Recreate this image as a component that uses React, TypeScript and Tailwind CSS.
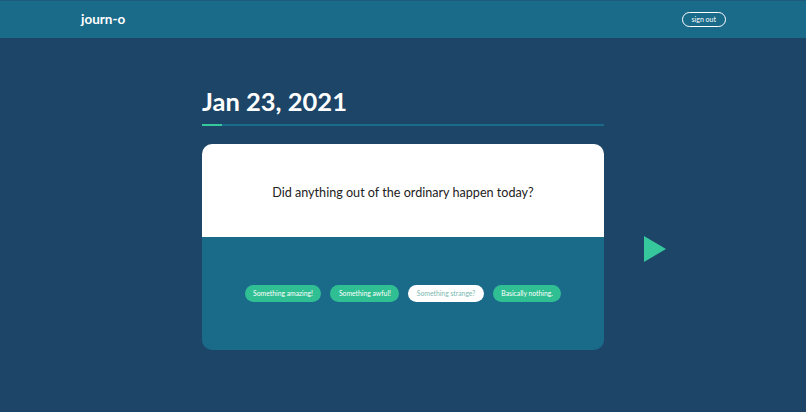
export default function App() {
  const answers = [
    { label: "Something amazing!", active: false },
    { label: "Something awful!", active: false },
    { label: "Something strange?", active: true },
    { label: "Basically nothing.", active: false },
  ];

  return (
    <div className="min-h-[412px] w-full bg-[#1c4568] font-['Lato',sans-serif]">
      <header className="h-[38px] bg-[#1a6a8a] border-t border-[#1e5a7a] flex items-center justify-between pl-[81px] pr-[80px]">
        <span className="text-[13.5px] font-bold text-white">journ-o</span>
        <button className="h-[15px] px-[9px] rounded-full border border-white text-white text-[7px] leading-none flex items-center">
          sign out
        </button>
      </header>

      <main className="relative w-[402px] mx-auto pt-[47px]">
        <h1 className="text-[25.5px] font-bold text-white leading-[32px]">Jan 23, 2021</h1>
        <div className="mt-[7px] h-[2px] bg-[#1a6a8a] flex">
          <div className="w-[20px] h-full bg-[#36c79c]" />
        </div>

        <div className="mt-[18px] rounded-[10px] overflow-hidden">
          <div className="h-[93px] bg-white flex items-center justify-center pt-[6px]">
            <p className="text-[12.6px] text-[#222]">Did anything out of the ordinary happen today?</p>
          </div>
          <div className="h-[113px] bg-[#1a6a8a] flex items-center justify-center gap-[9px]">
            {answers.map((a) => (
              <button
                key={a.label}
                className={
                  a.active
                    ? "h-[17px] px-[8.5px] rounded-full bg-white text-[#7ab8b2] text-[6.8px] leading-none"
                    : "h-[17px] px-[8.5px] rounded-full bg-[#2fbf93] text-white text-[6.8px] leading-none"
                }
              >
                {a.label}
              </button>
            ))}
          </div>
        </div>

        <button className="absolute left-[442px] top-[198px]">
          <svg width="22" height="26" viewBox="0 0 22 26">
            <polygon points="0,0 22,13 0,26" fill="#36c79c" />
          </svg>
        </button>
      </main>
    </div>
  );
}
